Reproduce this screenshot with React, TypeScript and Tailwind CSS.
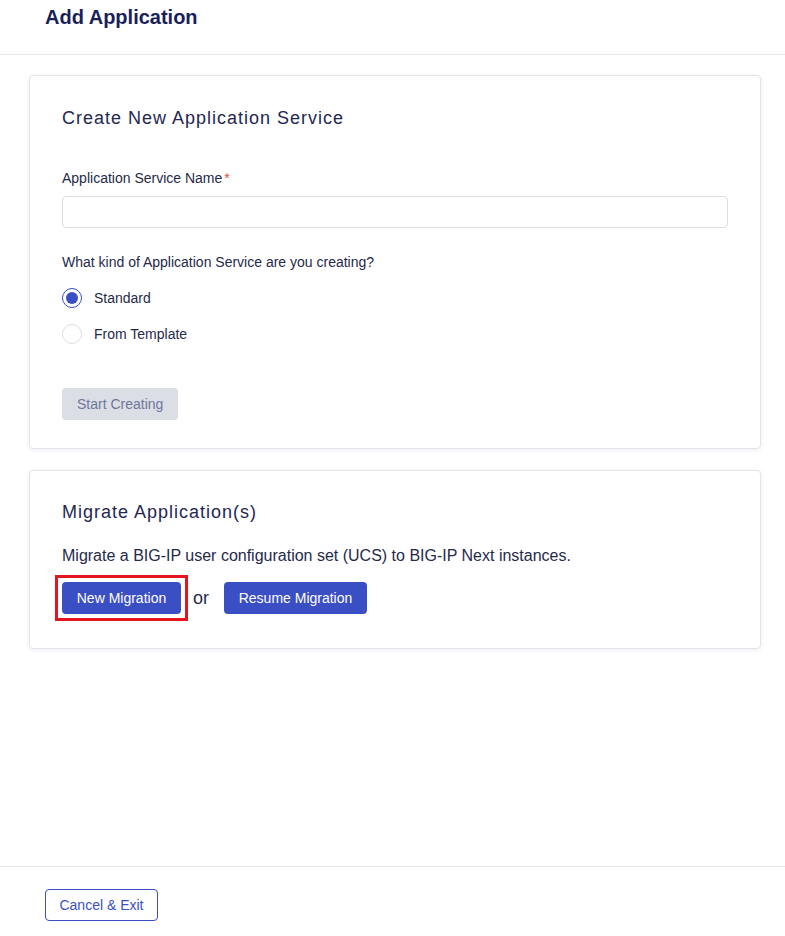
import React, { useState } from "react";

const font = "font-['Liberation_Sans',Arial,sans-serif]";

type RadioProps = {
  label: string;
  checked: boolean;
  onSelect: () => void;
};

const Radio = ({ label, checked, onSelect }: RadioProps) => (
  <label className="flex items-center gap-3 cursor-pointer h-5" onClick={onSelect}>
    <span
      className={
        checked
          ? "w-5 h-5 rounded-full border-[1.5px] border-[#3b4fc4] flex items-center justify-center"
          : "w-5 h-5 rounded-full border border-[#dcdde4] bg-white"
      }
    >
      {checked && <span className="w-3 h-3 rounded-full bg-[#3b4fc4]" />}
    </span>
    <span className="text-sm leading-5 text-[#252a4a]">{label}</span>
  </label>
);

const App = () => {
  const [kind, setKind] = useState("standard");
  const [name, setName] = useState("");

  return (
    <div className={`${font} w-[785px] h-[936px] bg-white flex flex-col`}>
      {/* header */}
      <div className="h-[55px] border-b border-[#e6e7ee] px-[45px] pt-[3px]">
        <h1 className="text-[20px] leading-7 font-bold text-[#1a1f5a]">Add Application</h1>
      </div>

      <div className="flex-1 pl-[29px] pr-[24px] pt-[20px] flex flex-col gap-[21px]">
        {/* create card */}
        <div className="border border-[#e3e3eb] rounded-[4px] shadow-[0_1px_4px_rgba(40,40,90,0.08)] px-[32px] pt-[30px] pb-[28px]">
          <h2 className="text-[18px] leading-6 tracking-[1px] text-[#1f2752]">
            Create New Application Service
          </h2>
          <div className="mt-[38px] text-sm leading-5 text-[#252a4a]">
            Application Service Name<span className="text-[#e5483a] ml-[2px]">*</span>
          </div>
          <input
            value={name}
            onChange={(e) => setName(e.target.value)}
            className="mt-2 w-full h-8 border border-[#dcdde4] rounded-[4px] px-3 text-sm outline-none"
          />
          <div className="mt-6 text-sm leading-5 text-[#252a4a]">
            What kind of Application Service are you creating?
          </div>
          <div className="mt-4 flex flex-col gap-4">
            <Radio label="Standard" checked={kind === "standard"} onSelect={() => setKind("standard")} />
            <Radio label="From Template" checked={kind === "template"} onSelect={() => setKind("template")} />
          </div>
          <button
            disabled={!name}
            className="mt-[44px] h-8 px-[15px] rounded-[4px] bg-[#dcdee6] text-sm text-[#6f7899]"
          >
            Start Creating
          </button>
        </div>

        {/* migrate card */}
        <div className="border border-[#e3e3eb] rounded-[4px] shadow-[0_1px_4px_rgba(40,40,90,0.08)] pl-[25px] pr-[32px] pt-[29px] pb-[27px]">
          <h2 className="pl-[7px] text-[18px] leading-6 tracking-[1px] text-[#1f2752]">
            Migrate Application(s)
          </h2>
          <p className="pl-[7px] mt-[20px] text-base leading-6 text-[#252a4a]">
            Migrate a BIG-IP user configuration set (UCS) to BIG-IP Next instances.
          </p>
          <div className="mt-[7px] flex items-center">
            <span className="border-[3px] border-[#e4151f] p-[4px]">
              <button className="block h-8 w-[119px] rounded-[4px] bg-[#3b4fc4] text-white text-sm">
                New Migration
              </button>
            </span>
            <span className="ml-[5px] mr-[15px] text-[18px] leading-6 text-[#252a4a]">or</span>
            <button className="h-8 w-[143px] rounded-[4px] bg-[#3b4fc4] text-white text-sm">
              Resume Migration
            </button>
          </div>
        </div>
      </div>

      {/* footer */}
      <div className="h-[70px] border-t border-[#e6e7ee] px-[45px] pt-[22px]">
        <button className="h-8 w-[113px] rounded-[4px] border border-[#3b4fc4] text-sm text-[#3b4fc4] bg-white">
          Cancel &amp; Exit
        </button>
      </div>
    </div>
  );
};

export default App;
